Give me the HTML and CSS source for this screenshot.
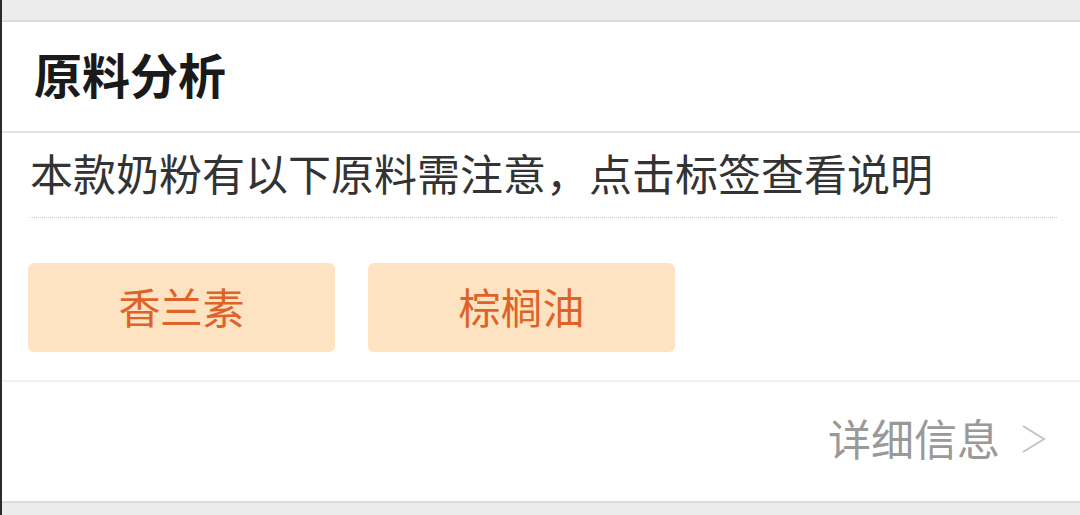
FILE: index.html
```html
<!DOCTYPE html>
<html lang="zh-CN">
<head>
<meta charset="utf-8">
<link rel="stylesheet" href="styles.css">
</head>
<body>
<div class="page">
  <section class="card">
    <header class="head"><h2 class="title">原料分析</h2></header>
    <div class="notice"><p class="notice-text">本款奶粉有以下原料需注意，点击标签查看说明</p></div>
    <div class="tags">
      <div class="tag">香兰素</div>
      <div class="tag">棕榈油</div>
    </div>
    <footer class="foot">
      <span class="more">详细信息</span>
      <svg class="chev" width="26" height="30" viewBox="0 0 26 30"><path d="M3 2 L24 15 L3 28" fill="none" stroke="#c4c4c4" stroke-width="2"/></svg>
    </footer>
  </section>
</div>
</body>
</html>
```
FILE: styles.css
```css
html, body {
  margin: 0;
  padding: 0;
  background: #ececec;
}
body {
  font-family: "Noto Sans CJK SC", "Noto Sans", sans-serif;
  width: 1080px;
  height: 515px;
  overflow: hidden;
}
.page {
  box-sizing: border-box;
  height: 515px;
  padding-top: 20px;
  border-left: 2px solid #2b2b2b;
}
.card {
  background: #fff;
  border-top: 2px solid #dcdcdc;
  border-bottom: 2px solid #dcdcdc;
}
.head {
  height: 111px;
  box-sizing: border-box;
  display: flex;
  align-items: center;
  padding: 0 0 8px 32px;
  border-bottom: 2px solid #e2e2e2;
}
.title {
  margin: 0;
  font-size: 48px;
  line-height: 1;
  font-weight: 700;
  color: #1a1a1a;
}
.notice {
  margin: 0 23px 0 28px;
  height: 85px;
  box-sizing: border-box;
  display: flex;
  align-items: center;
  padding-bottom: 6px;
  border-bottom: 1px dotted #c9c9c9;
}
.notice-text {
  margin: 0;
  font-size: 43px;
  line-height: 1;
  color: #333;
}
.tags {
  display: flex;
  gap: 33px;
  padding: 45px 0 28px 26px;
  border-bottom: 2px solid #f1f1f1;
}
.tag {
  width: 307px;
  height: 89px;
  border-radius: 6px;
  background: #fde3c1;
  color: #dd6329;
  font-size: 42px;
  line-height: 1;
  display: flex;
  align-items: center;
  justify-content: center;
  padding-bottom: 4px;
  box-sizing: border-box;
}
.foot {
  height: 119px;
  box-sizing: border-box;
  display: flex;
  align-items: center;
  justify-content: flex-end;
  gap: 20px;
  padding: 0 34px 8px 0;
}
.more {
  font-size: 43px;
  line-height: 1;
  color: #999;
}
.chev {
  display: block;
  margin-top: 2px;
}
```
